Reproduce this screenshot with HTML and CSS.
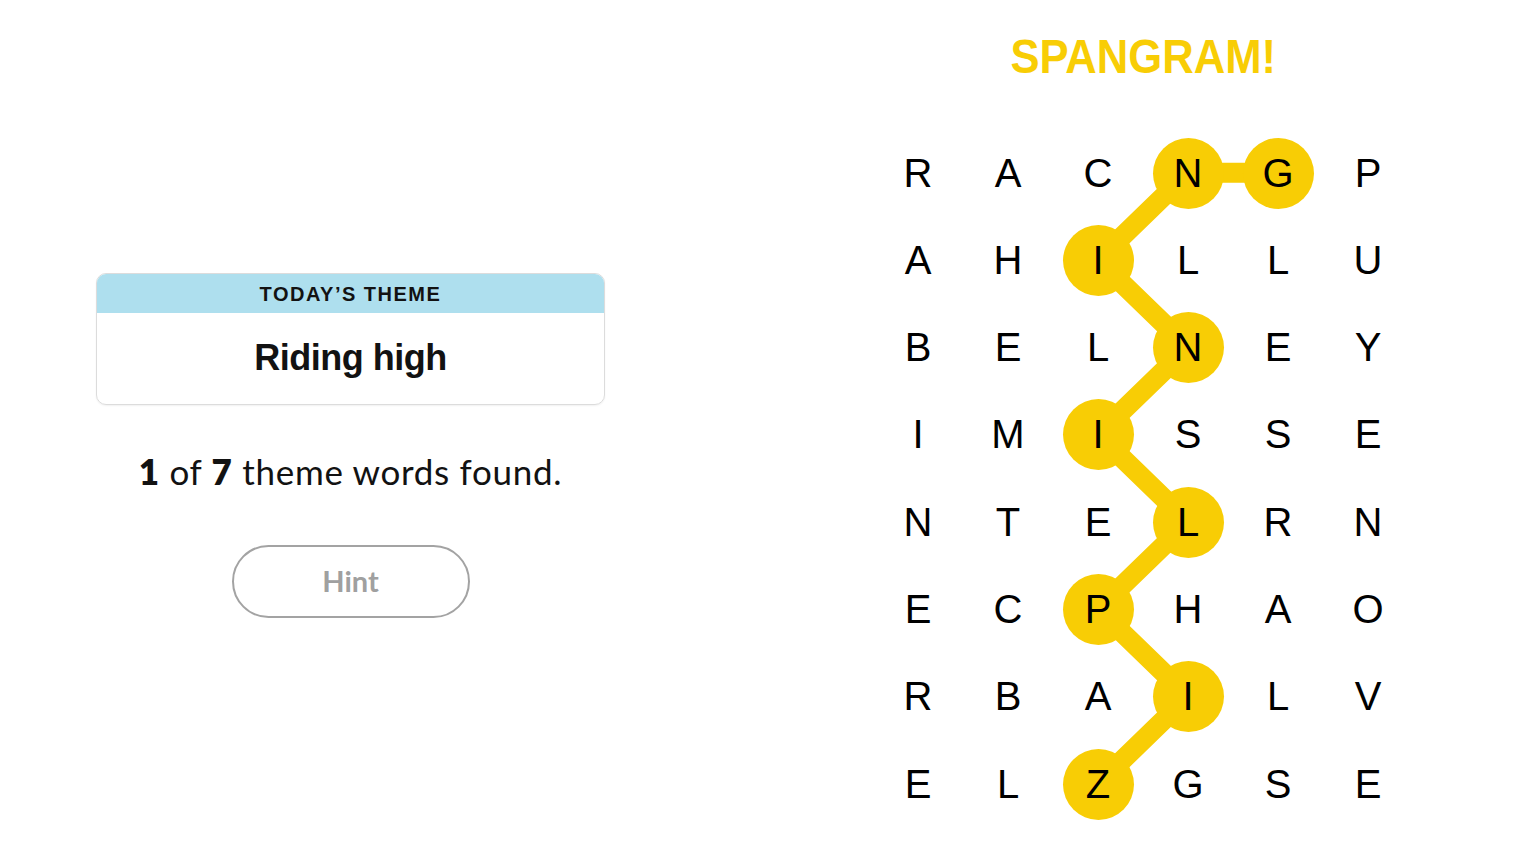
FILE: index.html
```html
<!DOCTYPE html>
<html>
<head>
<meta charset="utf-8">
<link rel="stylesheet" href="styles.css">
</head>
<body>
<div class="page">
  <section class="left">
    <div class="card">
      <div class="card-head">TODAY’S THEME</div>
      <div class="card-body">Riding high</div>
    </div>
    <p class="count"><b>1</b> of <b>7</b> theme words found.</p>
    <button class="hint">Hint</button>
  </section>
  <section class="right">
    <h1 class="title"><span>SPANGRAM!</span></h1>
    <div class="board">
      <svg class="path" viewBox="0 0 540 698.4" width="540" height="698.4">
        <polyline points="405,43.65 315,43.65 225,130.95 315,218.25 225,305.55 315,392.85 225,480.15 315,567.45 225,654.75" fill="none" stroke="#f8cd05" stroke-width="20" stroke-linejoin="round" stroke-linecap="round"/>
      </svg>
      <div class="grid">
        <div class="cell">R</div><div class="cell">A</div><div class="cell">C</div><div class="cell sel"><span>N</span></div><div class="cell sel"><span>G</span></div><div class="cell">P</div>
        <div class="cell">A</div><div class="cell">H</div><div class="cell sel"><span>I</span></div><div class="cell">L</div><div class="cell">L</div><div class="cell">U</div>
        <div class="cell">B</div><div class="cell">E</div><div class="cell">L</div><div class="cell sel"><span>N</span></div><div class="cell">E</div><div class="cell">Y</div>
        <div class="cell">I</div><div class="cell">M</div><div class="cell sel"><span>I</span></div><div class="cell">S</div><div class="cell">S</div><div class="cell">E</div>
        <div class="cell">N</div><div class="cell">T</div><div class="cell">E</div><div class="cell sel"><span>L</span></div><div class="cell">R</div><div class="cell">N</div>
        <div class="cell">E</div><div class="cell">C</div><div class="cell sel"><span>P</span></div><div class="cell">H</div><div class="cell">A</div><div class="cell">O</div>
        <div class="cell">R</div><div class="cell">B</div><div class="cell">A</div><div class="cell sel"><span>I</span></div><div class="cell">L</div><div class="cell">V</div>
        <div class="cell">E</div><div class="cell">L</div><div class="cell sel"><span>Z</span></div><div class="cell">G</div><div class="cell">S</div><div class="cell">E</div>
      </div>
    </div>
  </section>
</div>
</body>
</html>
```
FILE: styles.css
```css
html, body {
  margin: 0;
  padding: 0;
  background: #ffffff;
}
body {
  font-family: "Liberation Sans", Arial, sans-serif;
  color: #121212;
}
.page {
  display: flex;
  width: 1536px;
  height: 864px;
  overflow: hidden;
}
.left {
  width: 509px;
  margin-left: 96px;
  padding-top: 273px;
  display: flex;
  flex-direction: column;
  align-items: center;
}
.card {
  width: 100%;
  box-sizing: border-box;
  border: 1px solid #dcdcdc;
  border-radius: 10px;
  overflow: hidden;
  box-shadow: 0 1px 2px rgba(0,0,0,0.06);
}
.card-head {
  height: 39px;
  line-height: 41px;
  background: #aedfee;
  text-align: center;
  font-weight: 700;
  font-size: 20px;
  letter-spacing: 1.5px;
  color: #121212;
}
.card-body {
  height: 91px;
  line-height: 89px;
  text-align: center;
  font-weight: 700;
  font-size: 36px;
  letter-spacing: -0.5px;
  color: #121212;
}
.count {
  margin: 46px 0 0;
  font-family: Lato, "Liberation Sans", sans-serif;
  font-size: 35px;
  letter-spacing: 0.7px;
  line-height: 40px;
  color: #121212;
}
.count b {
  font-weight: 800;
}
.hint {
  margin-top: 54px;
  width: 238px;
  height: 73px;
  border: 2.5px solid #a3a3a3;
  border-radius: 37px;
  background: #fff;
  font-family: Lato, "Liberation Sans", sans-serif;
  font-weight: 700;
  font-size: 29px;
  line-height: 1;
  padding: 0 0 3px;
  color: #a0a0a0;
}
.right {
  margin-left: 268px;
  width: 540px;
  display: flex;
  flex-direction: column;
  align-items: center;
}
.title {
  margin: 0;
  padding-top: 28px;
  height: 56px;
  line-height: 56px;
  font-size: 49px;
  font-weight: 700;
  color: #f8cd05;
}
.title span {
  display: inline-block;
  transform: scaleX(0.89);
}
.board {
  position: relative;
  margin-top: 45.4px;
  width: 540px;
  height: 698.4px;
}
.path {
  position: absolute;
  left: 0;
  top: 0;
}
.grid {
  position: relative;
  display: grid;
  grid-template-columns: repeat(6, 90px);
  grid-template-rows: repeat(8, 87.3px);
}
.cell {
  display: flex;
  align-items: center;
  justify-content: center;
  font-size: 40px;
  color: #000;
}
.cell span {
  display: flex;
  align-items: center;
  justify-content: center;
  width: 71px;
  height: 71px;
  border-radius: 50%;
  background: #f8cd05;
}
```
